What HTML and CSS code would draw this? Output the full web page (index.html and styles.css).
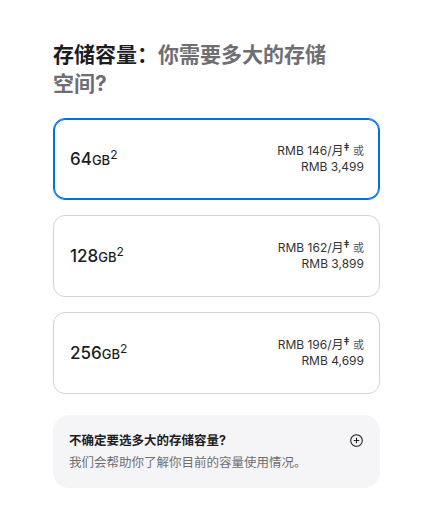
FILE: index.html
```html
<!DOCTYPE html>
<html lang="zh-CN">
<head>
    <meta charset="utf-8">
    <title>存储容量</title>
    <link rel="stylesheet" href="styles.css">
</head>
<body>
    <div class="storage">
        <h2 class="storage-title">存储容量：<span class="muted">你需要多大的存储空间?</span></h2>

        <div class="option selected">
            <div class="capacity">64<span class="unit">GB</span><sup>2</sup></div>
            <div class="price">
                <div>RMB 146/月<sup>‡</sup> <span class="or">或</span></div>
                <div>RMB 3,499</div>
            </div>
        </div>

        <div class="option">
            <div class="capacity">128<span class="unit">GB</span><sup>2</sup></div>
            <div class="price">
                <div>RMB 162/月<sup>‡</sup> <span class="or">或</span></div>
                <div>RMB 3,899</div>
            </div>
        </div>

        <div class="option">
            <div class="capacity">256<span class="unit">GB</span><sup>2</sup></div>
            <div class="price">
                <div>RMB 196/月<sup>‡</sup> <span class="or">或</span></div>
                <div>RMB 4,699</div>
            </div>
        </div>

        <div class="help">
            <div class="help-text">
                <div class="help-title">不确定要选多大的存储容量?</div>
                <div class="help-sub">我们会帮助你了解你目前的容量使用情况。</div>
            </div>
            <svg class="plus" width="13" height="13" viewBox="0 0 13 13">
                <circle cx="6.5" cy="6.5" r="5.8" fill="none" stroke="#1d1d1f" stroke-width="1.1"/>
                <path d="M6.5 3.8v5.4M3.8 6.5h5.4" stroke="#1d1d1f" stroke-width="1.1"/>
            </svg>
        </div>
    </div>
</body>
</html>
```

FILE: styles.css
```css
body {
    margin: 0;
    background: #fff;
    color: #1d1d1f;
    font-family: Inter, "Noto Sans CJK SC", sans-serif;
}

.storage {
    width: 327px;
    margin-left: 53px;
    padding-top: 40px;
}

.storage-title {
    width: 290px;
    margin: 0 0 20px;
    font-size: 21px;
    line-height: 29px;
    font-weight: 700;
}

.storage-title .muted {
    color: #6e6e73;
}

.option {
    box-sizing: border-box;
    height: 82px;
    margin-bottom: 15px;
    padding: 0 15px 0 16px;
    display: flex;
    align-items: center;
    justify-content: space-between;
    border: 1px solid #d2d2d7;
    border-radius: 12px;
}

.option.selected {
    border-color: #0071e3;
    box-shadow: inset 0 0 0 1px #0071e3;
}

.capacity {
    font-size: 17px;
    font-weight: 500;
}

.capacity .unit {
    font-size: 13px;
}

.capacity sup {
    font-size: 12px;
    font-weight: 400;
    vertical-align: 6px;
    line-height: 0;
}

.price {
    text-align: right;
    font-size: 12px;
    line-height: 16px;
    color: #333336;
}

.price sup {
    font-size: 11px;
    font-weight: 600;
    vertical-align: 4px;
    line-height: 0;
}

.price .or {
    font-size: 11px;
    color: #515154;
}

.help {
    margin-top: 21px;
    padding: 17px 17px 17px 16px;
    display: flex;
    align-items: flex-start;
    justify-content: space-between;
    background: #f5f5f7;
    border-radius: 16px;
}

.help-title {
    font-size: 12.5px;
    line-height: 17px;
    font-weight: 700;
}

.help-sub {
    margin-top: 5px;
    font-size: 12.5px;
    line-height: 17px;
    color: #6e6e73;
}

.plus {
    margin-top: 2px;
}
```
